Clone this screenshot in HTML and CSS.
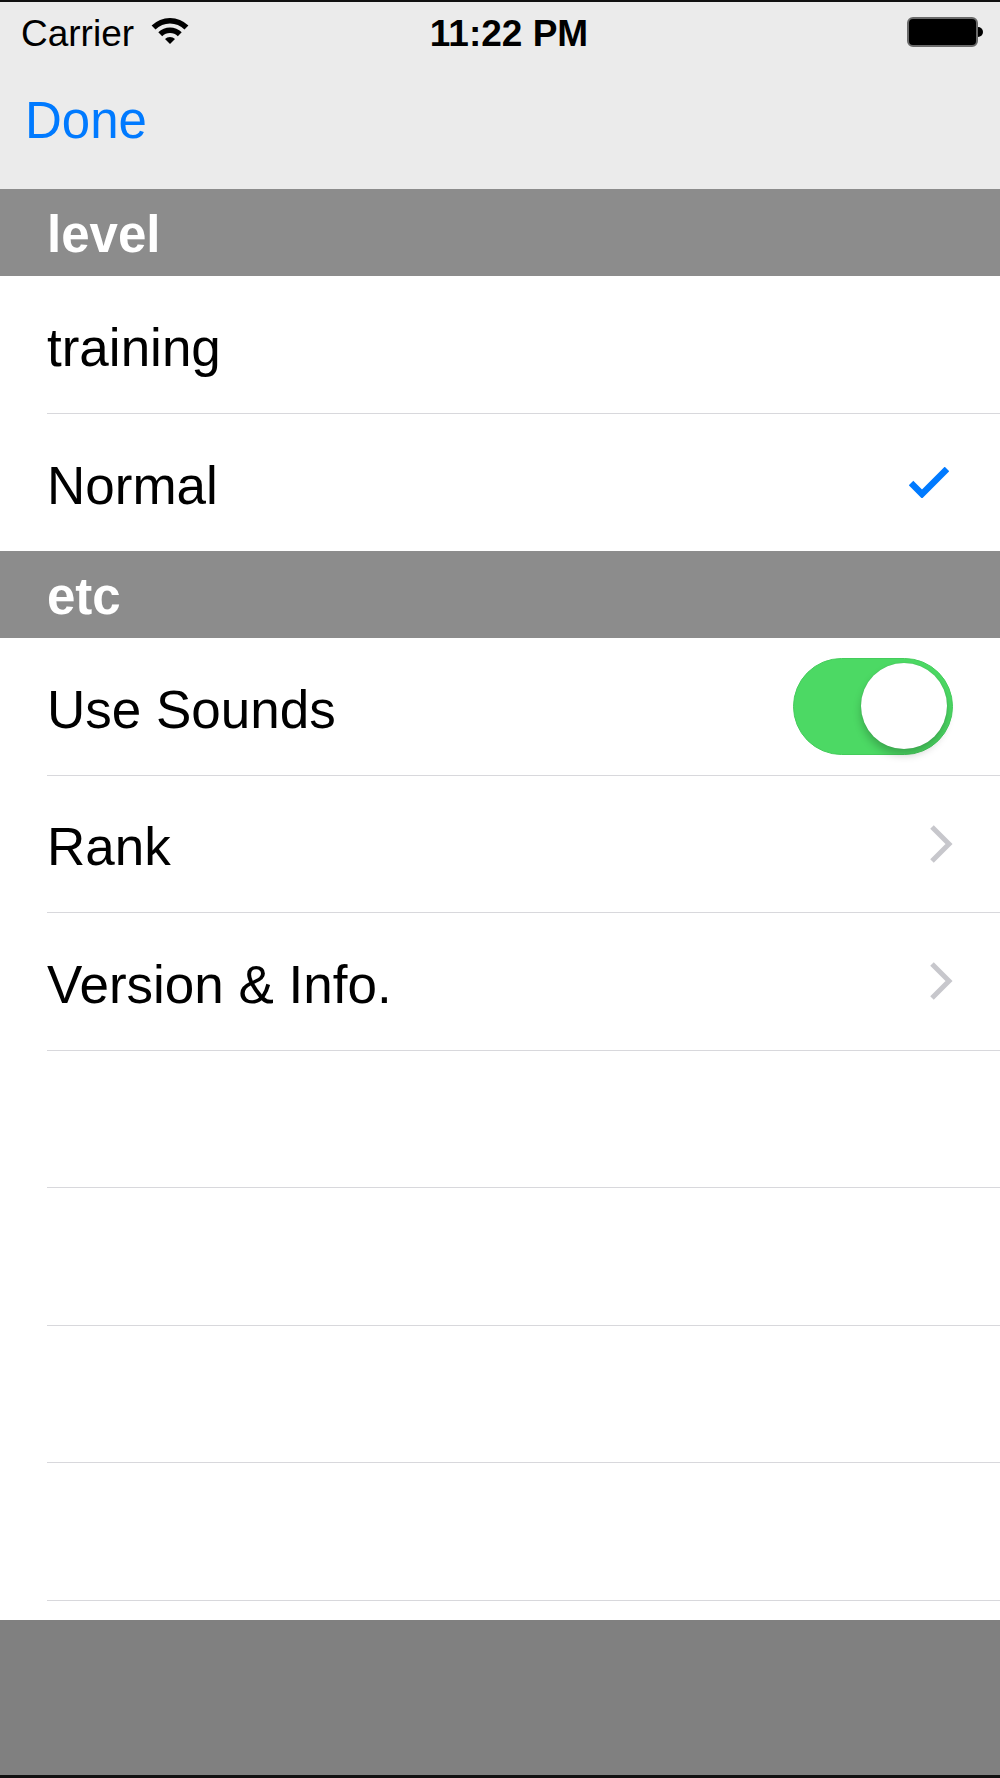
FILE: index.html
```html
<!DOCTYPE html>
<html lang="en">
<head>
    <meta charset="UTF-8">
    <meta name="viewport" content="width=device-width, initial-scale=1.0">
    <title>Settings</title>
    <link rel="stylesheet" href="styles.css">
</head>
<body>
    <div class="screen">
        <div class="edge edge-top"></div>
        <header class="top-bar">
            <div class="status-bar">
                <div class="status-left">
                    <span class="carrier">Carrier</span>
                    <svg class="wifi" width="38" height="28" viewBox="0 0 38 28">
                        <path d="M0.6 8.6 A26 26 0 0 1 37.4 8.6 L33.5 12.5 A20.5 20.5 0 0 0 4.5 12.5 Z"/>
                        <path d="M7.3 15.3 A16.5 16.5 0 0 1 30.7 15.3 L26.8 19.2 A11 11 0 0 0 11.2 19.2 Z"/>
                        <path d="M19 27 L14 22 A7 7 0 0 1 24 22 Z"/>
                    </svg>
                </div>
                <div class="status-time">11:22 PM</div>
                <div class="status-right">
                    <div class="battery">
                        <div class="battery-body"></div>
                        <div class="battery-tip"></div>
                    </div>
                </div>
            </div>
            <nav class="nav-bar">
                <a class="nav-done">Done</a>
            </nav>
        </header>

        <main class="table">
            <div class="section-header">level</div>
            <div class="cell">
                <div class="cell-body"><span>training</span></div>
            </div>
            <div class="cell cell-last">
                <div class="cell-body">
                    <span>Normal</span>
                    <svg class="check" width="40" height="31" viewBox="0 0 40 31">
                        <path d="M2 16 L13 27 L38 2" fill="none" stroke="#007aff" stroke-width="6.5"/>
                    </svg>
                </div>
            </div>

            <div class="section-header">etc</div>
            <div class="cell">
                <div class="cell-body">
                    <span>Use Sounds</span>
                    <div class="switch on"><div class="switch-knob"></div></div>
                </div>
            </div>
            <div class="cell">
                <div class="cell-body">
                    <span>Rank</span>
                    <svg class="chevron" width="24" height="40" viewBox="0 0 24 40">
                        <path d="M3 3 L20 20 L3 37" fill="none" stroke="#c7c7cc" stroke-width="5"/>
                    </svg>
                </div>
            </div>
            <div class="cell">
                <div class="cell-body">
                    <span>Version &amp; Info.</span>
                    <svg class="chevron" width="24" height="40" viewBox="0 0 24 40">
                        <path d="M3 3 L20 20 L3 37" fill="none" stroke="#c7c7cc" stroke-width="5"/>
                    </svg>
                </div>
            </div>
            <div class="cell"><div class="cell-body"></div></div>
            <div class="cell"><div class="cell-body"></div></div>
            <div class="cell"><div class="cell-body"></div></div>
            <div class="cell"><div class="cell-body"></div></div>
        </main>

        <footer class="tool-bar"></footer>
        <div class="edge edge-bottom"></div>
    </div>
</body>
</html>
```

FILE: styles.css
```css
* {
    box-sizing: border-box;
}

body {
    margin: 0;
    padding: 0;
    font-family: "Liberation Sans", Arial, sans-serif;
    background-color: #fff;
}

.screen {
    width: 1000px;
    height: 1778px;
    display: flex;
    flex-direction: column;
    overflow: hidden;
}

.edge {
    background-color: #111;
}

.edge-top {
    height: 2px;
}

.edge-bottom {
    height: 3px;
}

.top-bar {
    background-color: #ebebeb;
}

.status-bar {
    height: 58px;
    display: grid;
    grid-template-columns: 1fr auto 1fr;
    align-items: center;
    padding: 6px 17px 0 21px;
    font-size: 37px;
    color: #000;
}

.status-left {
    display: flex;
    align-items: center;
    gap: 17px;
}

.wifi {
    fill: #000;
    margin-top: -6px;
}

.status-time {
    font-weight: bold;
    margin-left: 14px;
}

.status-right {
    display: flex;
    justify-content: flex-end;
    margin-top: -4px;
}

.battery {
    display: flex;
    align-items: center;
}

.battery-body {
    width: 71px;
    height: 30px;
    background-color: #000;
    border: 2px solid #6a6a6a;
    border-radius: 6px;
}

.battery-tip {
    width: 5px;
    height: 10px;
    background-color: #000;
    border-radius: 0 5px 5px 0;
}

.nav-bar {
    height: 129px;
    display: flex;
    align-items: center;
    padding: 0 0 8px 25px;
}

.nav-done {
    font-size: 51px;
    color: #007aff;
    text-decoration: none;
}

.table {
    flex: 1;
    background-color: #fff;
}

.section-header {
    height: 87px;
    display: flex;
    align-items: center;
    padding: 4px 0 0 47px;
    background-color: #8c8c8c;
    color: #fff;
    font-size: 51px;
    font-weight: bold;
}

.cell {
    height: 137.5px;
    padding-left: 47px;
    background-color: #fff;
}

.cell-body {
    height: 100%;
    display: flex;
    align-items: center;
    justify-content: space-between;
    padding-right: 47px;
    border-bottom: 1px solid #d8d8dc;
    font-size: 53px;
    color: #000;
}

.cell-body span {
    padding-top: 6px;
}

.cell-last .cell-body {
    border-bottom: none;
}

.check {
    margin-right: 4px;
}

.switch {
    width: 160px;
    height: 97px;
    border-radius: 49px;
    padding: 5px;
    display: flex;
    align-items: center;
    background-color: #4cd964;
    border: 1px solid #45cc5c;
}

.switch.on {
    justify-content: flex-end;
}

.switch-knob {
    width: 86px;
    height: 86px;
    border-radius: 50%;
    background-color: #fff;
    box-shadow: 0 6px 8px rgba(0, 0, 0, 0.22), 0 0 1px rgba(0, 0, 0, 0.2);
}

.tool-bar {
    height: 155px;
    background-color: #808080;
}
```
